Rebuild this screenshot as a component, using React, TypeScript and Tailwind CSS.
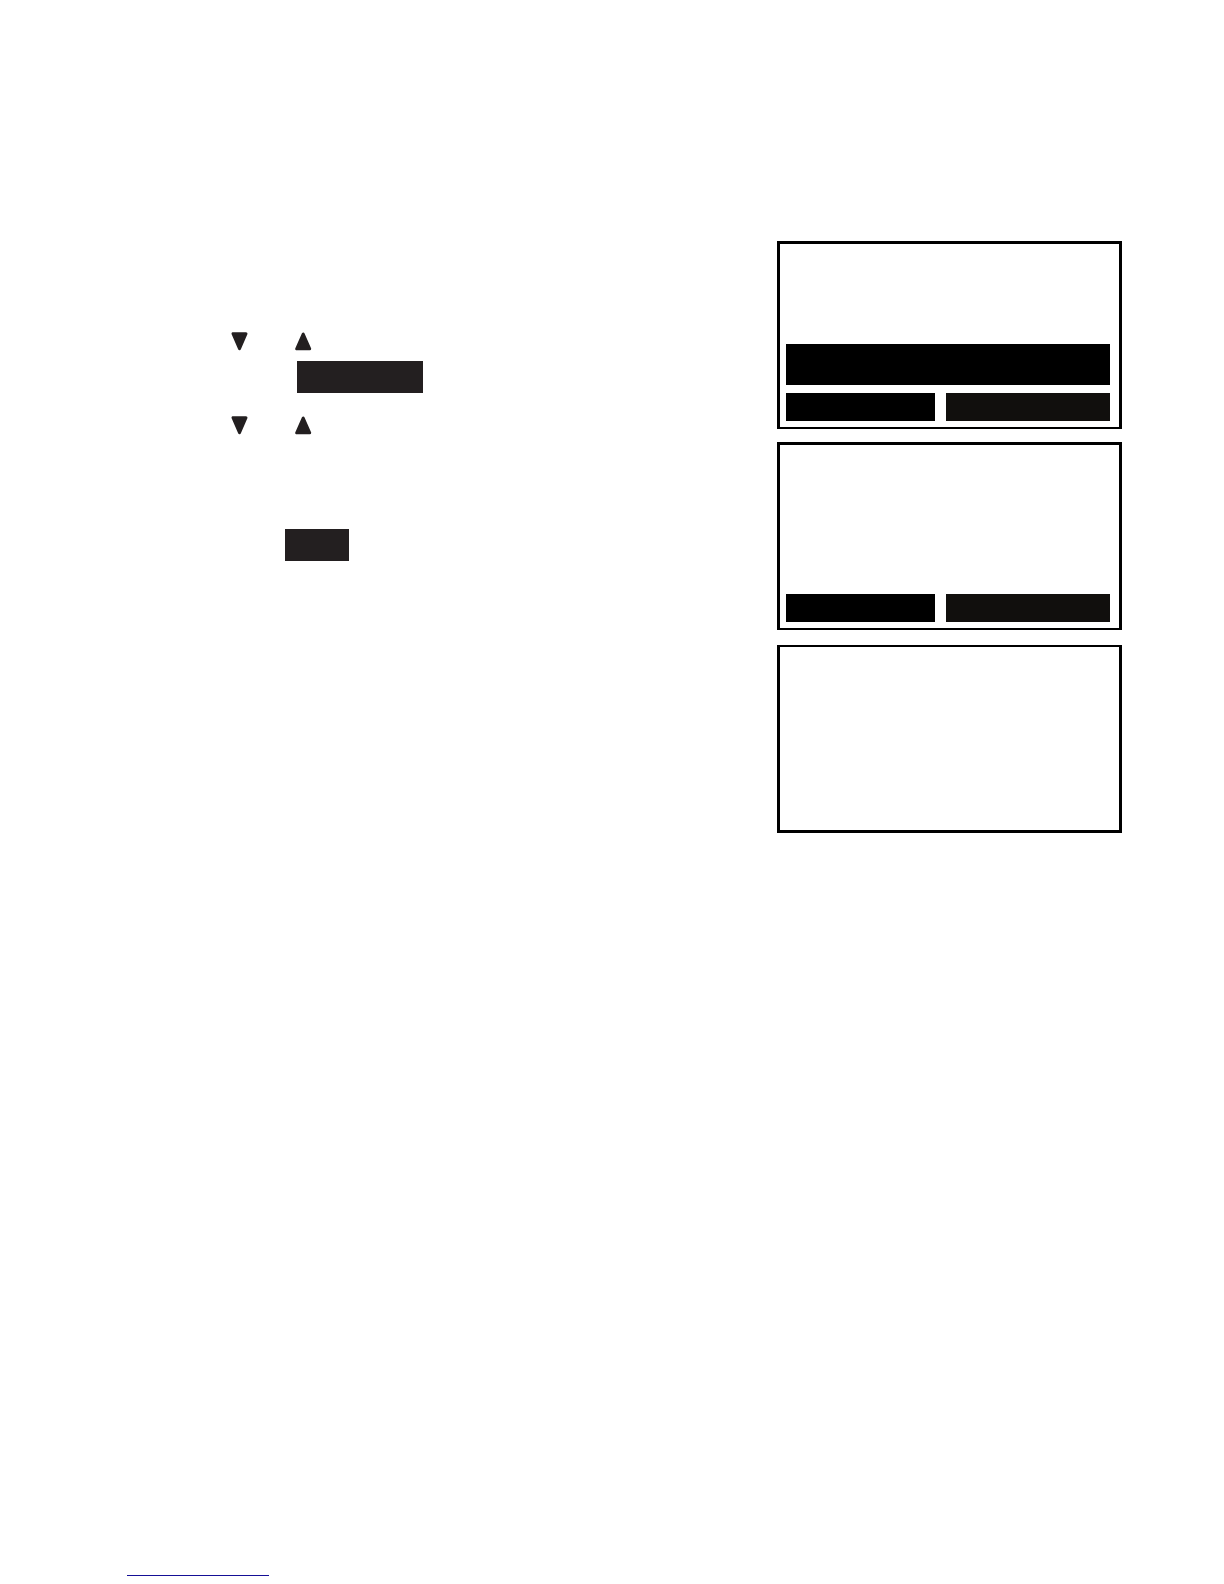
import { clsx } from 'clsx';

interface ScreenProps {
  highlighted?: boolean;
  softKeys?: boolean;
  className?: string;
}

function ArrowDown() {
  return (
    <svg className="w-[17px] h-5" viewBox="0 0 17 20" fill="#231f20" stroke="#231f20" strokeWidth="3" strokeLinejoin="round" aria-hidden="true">
      <path d="M2 1.7H15L8.5 16.6Z" />
    </svg>
  );
}

function ArrowUp() {
  return (
    <svg className="w-[17px] h-5" viewBox="0 0 17 20" fill="#231f20" stroke="#231f20" strokeWidth="3" strokeLinejoin="round" aria-hidden="true">
      <path d="M1.7 16.8H14.7L8.2 2Z" />
    </svg>
  );
}

function ArrowPair() {
  return (
    <div className="flex gap-[47px] ml-[104px]">
      <ArrowDown />
      <ArrowUp />
    </div>
  );
}

function SoftKeys() {
  return (
    <div className="grid grid-cols-[149fr_164fr] gap-[11px]">
      <div className="h-7 bg-black" />
      <div className="h-7 bg-[#110f0d]" />
    </div>
  );
}

function Screen({ highlighted, softKeys, className }: ScreenProps) {
  return (
    <div className={clsx('flex flex-col justify-end gap-2 min-h-[188px] border-x-3 border-black pl-1.5 pr-[9px] pb-1.5', className)}>
      {highlighted && <div className="h-[41px] bg-black" />}
      {softKeys && <SoftKeys />}
    </div>
  );
}

export default function App() {
  return (
    <div className="min-h-screen flex flex-col bg-white">
      <main className="grow grid grid-cols-[1fr_345px] items-start pt-[241px] pl-[127px] pr-[102px]">
        {/* Steps */}
        <ol className="pt-[91px]">
          <li>
            <ArrowPair />
            <div className="mt-[9px] ml-[170px] w-[126px] h-8 bg-[#231f20]" />
          </li>
          <li className="mt-[23px]">
            <ArrowPair />
          </li>
          <li className="mt-[93px]">
            <div className="ml-[158px] w-16 h-8 bg-[#231f20]" />
          </li>
        </ol>

        {/* Handset screens */}
        <div>
          <Screen highlighted softKeys className="border-t-3 border-b-2" />
          <Screen softKeys className="mt-[13px] border-t-3 border-b-2" />
          <Screen className="mt-[15px] border-t-2 border-b-3" />
        </div>
      </main>

      <footer className="pl-[127px] pb-2">
        <a href="#top" className="block w-[142px] h-5 border-b border-b-[#150f96]" />
      </footer>
    </div>
  );
}
